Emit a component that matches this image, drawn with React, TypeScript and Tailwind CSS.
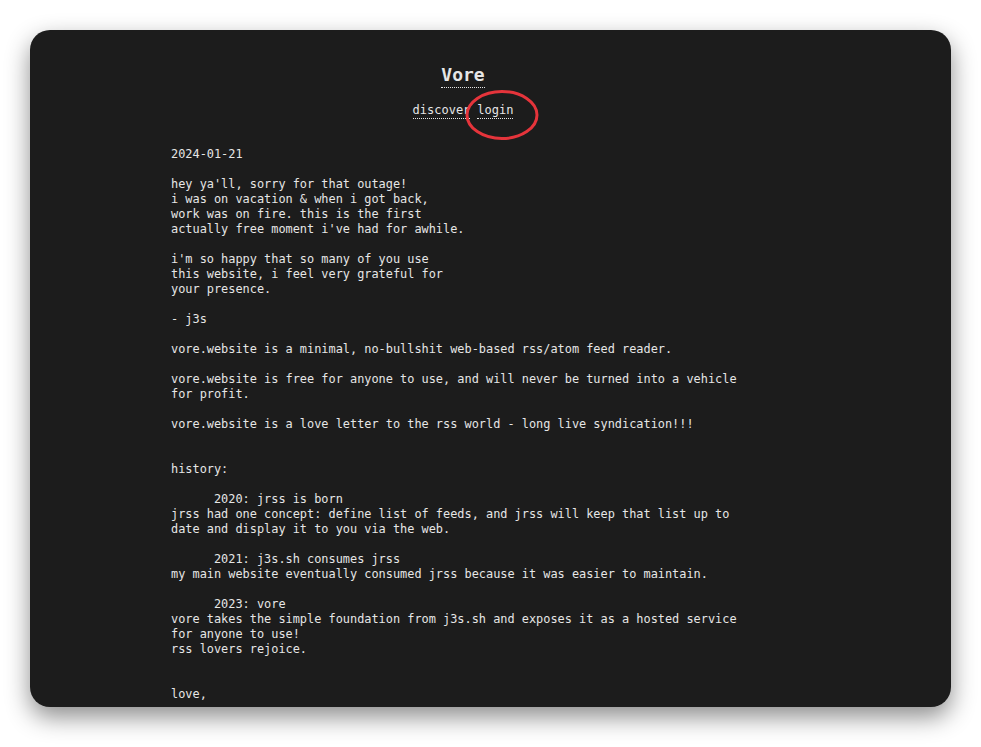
import React from 'react';

const body = `2024-01-21

hey ya'll, sorry for that outage!
i was on vacation & when i got back,
work was on fire. this is the first
actually free moment i've had for awhile.

i'm so happy that so many of you use
this website, i feel very grateful for
your presence.

- j3s

vore.website is a minimal, no-bullshit web-based rss/atom feed reader.

vore.website is free for anyone to use, and will never be turned into a vehicle
for profit.

vore.website is a love letter to the rss world - long live syndication!!!


history:

      2020: jrss is born
jrss had one concept: define list of feeds, and jrss will keep that list up to
date and display it to you via the web.

      2021: j3s.sh consumes jrss
my main website eventually consumed jrss because it was easier to maintain.

      2023: vore
vore takes the simple foundation from j3s.sh and exposes it as a hosted service
for anyone to use!
rss lovers rejoice.


love,`;

export default function App() {
  return (
    <div className="w-full h-[747px] bg-white p-[30px] font-['DejaVu_Sans_Mono','Liberation_Mono',monospace] text-[#e6e6e6]">
      <div className="h-[677px] rounded-[20px] bg-[#1c1c1c] shadow-[0_10px_24px_rgba(0,0,0,0.45)] overflow-hidden">
        <div className="w-[584px] ml-[141px] pt-[33px]">
          <div className="flex justify-center">
            <a className="text-[18px] leading-[24px] font-bold border-b border-dotted border-[#e6e6e6]">Vore</a>
          </div>

          <nav className="relative flex justify-center gap-[7px] mt-[15px] text-[12px] leading-[15px]">
            <a className="border-b border-dotted border-[#e6e6e6]">discover</a>
            <a className="border-b border-dotted border-[#e6e6e6]">login</a>
            {/* red annotation circle */}
            <svg className="absolute left-[292px] top-[-15px] pointer-events-none" width="78" height="54" viewBox="0 0 78 54">
              <ellipse cx="39" cy="27" rx="35" ry="23.5" fill="none" stroke="#e5343b" strokeWidth="3" />
            </svg>
          </nav>

          <pre className="mt-[28px] whitespace-pre text-[11.9px] leading-[15px] font-['DejaVu_Sans_Mono','Liberation_Mono',monospace]">
            {body}
          </pre>
        </div>
      </div>
    </div>
  );
}
